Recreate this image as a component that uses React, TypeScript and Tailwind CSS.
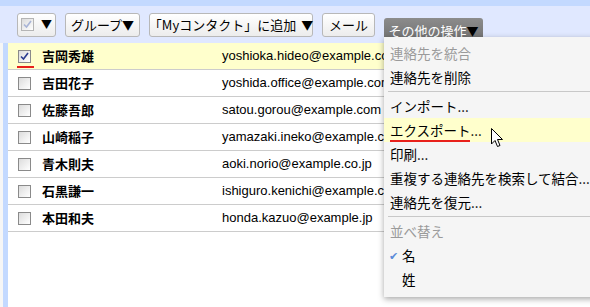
import type { ReactElement } from "react";

const jp = "font-['Noto_Sans_CJK_JP','Liberation_Sans',sans-serif]";

interface Contact {
  name: string;
  email: string;
  selected?: boolean;
}

const contacts: Contact[] = [
  { name: "吉岡秀雄", email: "yoshioka.hideo@example.com", selected: true },
  { name: "吉田花子", email: "yoshida.office@example.com" },
  { name: "佐藤吾郎", email: "satou.gorou@example.com" },
  { name: "山崎稲子", email: "yamazaki.ineko@example.com" },
  { name: "青木則夫", email: "aoki.norio@example.co.jp" },
  { name: "石黒謙一", email: "ishiguro.kenichi@example.com" },
  { name: "本田和夫", email: "honda.kazuo@example.jp" },
];

function Checkbox({ checked, disabled }: { checked?: boolean; disabled?: boolean }): ReactElement {
  return (
    <span
      className={`flex h-[13px] w-[13px] shrink-0 items-center justify-center border bg-gradient-to-br from-[#dcdcdc] to-white ${
        disabled ? "border-[#b5b5b5]" : "border-[#8a8a8a]"
      }`}
    >
      {checked && (
        <svg width="9" height="9" viewBox="0 0 9 9">
          <path
            d="M1 4.5 L3.5 7 L8 1"
            fill="none"
            stroke={disabled ? "#a8b4d6" : "#2a3b8f"}
            strokeWidth="1.6"
          />
        </svg>
      )}
    </span>
  );
}

function ToolButton({ width, children }: { width: string; children: React.ReactNode }): ReactElement {
  return (
    <div
      className={`flex h-[24px] items-center justify-center whitespace-nowrap rounded-[3px] border border-[#b8b8b8] bg-gradient-to-b from-white to-[#ececec] text-[13px] text-black ${width}`}
    >
      {children}
    </div>
  );
}

function MenuItem({
  label,
  muted,
  highlight,
  underline,
}: {
  label: string;
  muted?: boolean;
  highlight?: boolean;
  underline?: boolean;
}): ReactElement {
  return (
    <div
      className={`relative flex h-[24px] items-center whitespace-nowrap pl-[6px] text-[13.5px] ${
        muted ? "text-[#9a9a9a]" : "text-black"
      } ${highlight ? "bg-[#ffffcc]" : ""}`}
    >
      {label}
      {underline && (
        <span className="absolute left-[6px] top-[22px] h-[2px] w-[80px] bg-[#e8211b]" />
      )}
    </div>
  );
}

export default function App(): ReactElement {
  return (
    <div className={`relative h-[307px] w-[590px] overflow-hidden bg-white ${jp}`}>
      <div className="h-[6px] bg-[#c3d9ff]" />
      <div className="flex h-[37px] items-center gap-[9px] bg-[#e0e8ff] pl-[17px]">
        <ToolButton width="w-[39px]">
          <span className="flex items-center gap-[7px]">
            <Checkbox checked disabled />
            <span className="text-[11px]">▼</span>
          </span>
        </ToolButton>
        <ToolButton width="w-[75px]">
          グループ<span className="text-[12px]">▼</span>
        </ToolButton>
        <ToolButton width="w-[164px]">
          <span>「Myコンタクト」に追加</span>
          <span className="ml-[5px] text-[12px]">▼</span>
        </ToolButton>
        <ToolButton width="w-[53px]">メール</ToolButton>
        <div className="mt-[2px] flex h-[25px] w-[99px] items-center justify-center self-end whitespace-nowrap rounded-t-[3px] bg-gradient-to-b from-[#8c8c8c] to-[#6e6e6e] text-[13px] text-white">
          その他の操作<span className="text-[12px] text-black">▼</span>
        </div>
      </div>

      <div className="flex h-[264px]">
        <div className="w-[3px] bg-[#f6f6f6]" />
        <div className="w-[5px] bg-[#c3d9ff]" />
        <div className="flex-1">
          {contacts.map((c) => (
            <div
              key={c.email}
              className={`relative flex h-[27px] items-center border-b border-[#cccccc] ${
                c.selected ? "bg-[#ffffcc]" : "bg-white"
              }`}
            >
              <div className="w-[34px] pl-[10px]">
                <Checkbox checked={c.selected} />
              </div>
              <div className="w-[180px] text-[13px] font-bold text-black">{c.name}</div>
              <div className="whitespace-nowrap font-['Liberation_Sans',Arial,sans-serif] text-[13px] text-black">
                {c.email}
              </div>
              {c.selected && (
                <span className="absolute left-[9px] top-[23px] h-[2px] w-[17px] bg-[#e8211b]" />
              )}
            </div>
          ))}
        </div>
      </div>

      <div className="absolute left-[384px] top-[37px] w-[230px] bg-[#f5f5f5] pt-[4px] pb-[6px] shadow-[0_2px_6px_rgba(0,0,0,0.35)]">
        <MenuItem label="連絡先を統合" muted />
        <MenuItem label="連絡先を削除" />
        <div className="mx-[4px] my-[2px] h-px bg-[#c8c8c8]" />
        <MenuItem label="インポート..." />
        <MenuItem label="エクスポート..." highlight underline />
        <MenuItem label="印刷..." />
        <MenuItem label="重複する連絡先を検索して結合..." />
        <MenuItem label="連絡先を復元..." />
        <div className="mx-[4px] my-[2px] h-px bg-[#c8c8c8]" />
        <MenuItem label="並べ替え" muted />
        <div className="flex h-[24px] items-center pl-[5px] text-[13.5px] text-black">
          <span className="w-[13px] text-[11px] text-[#5b8bd9]">✔</span>名
        </div>
        <div className="flex h-[24px] items-center pl-[18px] text-[13.5px] text-black">姓</div>
      </div>

      <svg
        className="absolute left-[491px] top-[128px]"
        width="14"
        height="21"
        viewBox="0 0 14 21"
      >
        <path
          d="M0.5 0.5 L0.5 16 L4 12.5 L6.5 18.5 L9 17.5 L6.5 11.5 L11.5 11.5 Z"
          fill="white"
          stroke="black"
          strokeWidth="1"
        />
      </svg>
    </div>
  );
}
